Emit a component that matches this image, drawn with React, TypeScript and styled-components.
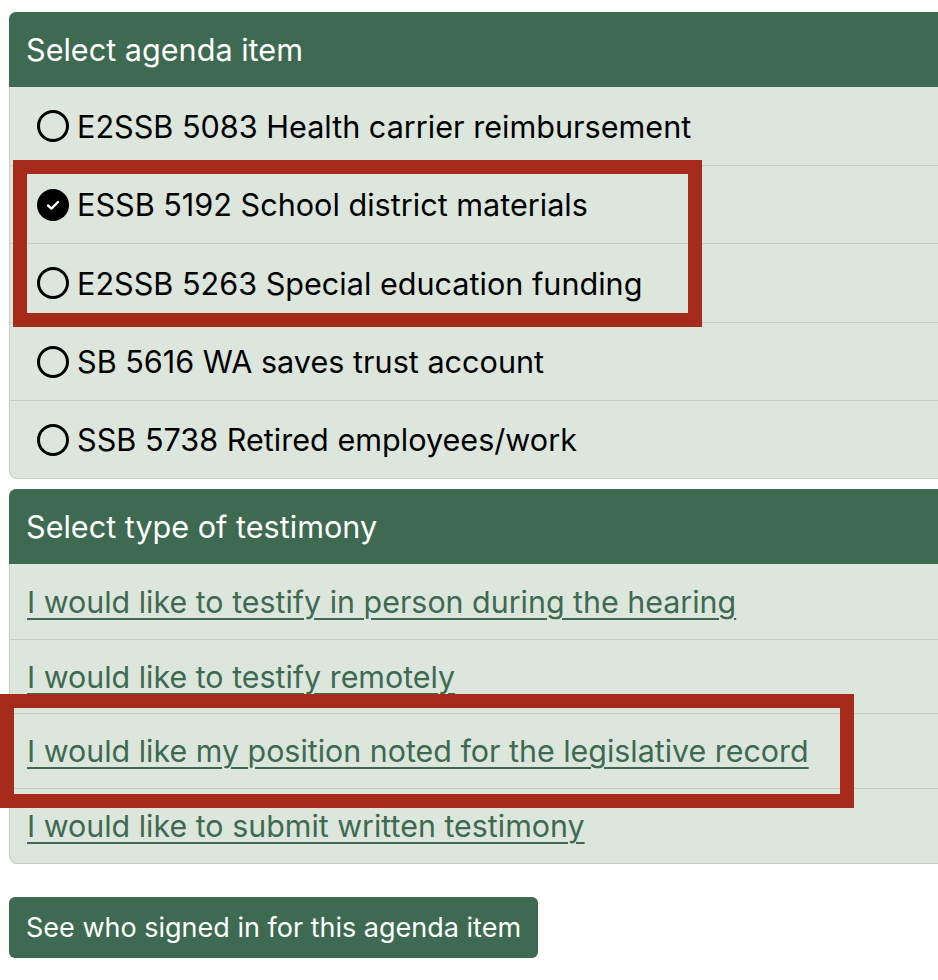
import React from "react";
import styled, { createGlobalStyle } from "styled-components";

const GlobalStyle = createGlobalStyle`
  html, body {
    margin: 0;
    padding: 0;
    background: #ffffff;
    overflow: hidden;
  }
  body {
    font-family: Inter, "Liberation Sans", Arial, sans-serif;
    -webkit-font-smoothing: antialiased;
  }
`;

const GREEN = "#3d6a51";
const BG = "#dde6dd";
const LINE = "#c3cec5";
const RED = "#a62b1b";

const Page = styled.div`
  padding: 12px 0 0 9px;
  display: flex;
  flex-direction: column;
  align-items: stretch;
`;

const Card = styled.section<{ $gap?: number }>`
  background: ${BG};
  border: 1px solid ${LINE};
  border-right: none;
  border-radius: 8px 0 0 8px;
  margin-bottom: ${(p) => p.$gap ?? 0}px;
`;

const CardHeader = styled.div`
  height: 75px;
  background: ${GREEN};
  color: #ffffff;
  font-size: 30.6px;
  display: flex;
  align-items: center;
  padding-left: 17px;
  border-radius: 7px 0 0 0;
  margin: -1px 0 0 -1px;
`;

const Group = styled.div`
  position: relative;
`;

const Row = styled.div<{ $h: number; $first?: boolean }>`
  height: ${(p) => p.$h}px;
  box-sizing: border-box;
  border-top: ${(p) => (p.$first ? "none" : `1px solid ${LINE}`)};
  display: flex;
  align-items: center;
  color: #000000;
`;

const RadioRow = styled(Row)`
  padding-left: 27px;
  gap: 8px;
  font-size: 30.6px;
`;

const LinkRow = styled(Row)`
  padding-left: 17px;
  font-size: 30.4px;
`;

const Link = styled.a`
  color: ${GREEN};
  text-decoration: underline;
  text-decoration-thickness: 2px;
  text-underline-offset: 5px;
  cursor: pointer;
`;

const Highlight = styled.div<{
  $top: number;
  $left: number;
  $w: number;
  $h: number;
}>`
  position: absolute;
  top: ${(p) => p.$top}px;
  left: ${(p) => p.$left}px;
  width: ${(p) => p.$w}px;
  height: ${(p) => p.$h}px;
  box-sizing: border-box;
  border: 14px solid ${RED};
  pointer-events: none;
`;

const Button = styled.button`
  align-self: flex-start;
  margin-top: 33px;
  height: 61px;
  padding: 0 17px;
  background: ${GREEN};
  color: #ffffff;
  border: none;
  border-radius: 6px;
  font-family: inherit;
  font-size: 27px;
  cursor: pointer;
`;

const RadioIcon = ({ checked }: { checked?: boolean }) =>
  checked ? (
    <svg width="32" height="32" viewBox="0 0 32 32">
      <circle cx="16" cy="16" r="16" fill="#000" />
      <path
        d="M11 16.5 L14.4 19.6 L21 13"
        fill="none"
        stroke="#fff"
        strokeWidth="2.4"
        strokeLinecap="round"
        strokeLinejoin="round"
      />
    </svg>
  ) : (
    <svg width="32" height="32" viewBox="0 0 32 32">
      <circle cx="16" cy="16" r="14.5" fill="none" stroke="#000" strokeWidth="3" />
    </svg>
  );

const agenda = [
  { label: "E2SSB 5083 Health carrier reimbursement" },
  { label: "ESSB 5192 School district materials", checked: true },
  { label: "E2SSB 5263 Special education funding" },
  { label: "SB 5616 WA saves trust account" },
  { label: "SSB 5738 Retired employees/work" },
];

const testimony = [
  "I would like to testify in person during the hearing",
  "I would like to testify remotely",
  "I would like my position noted for the legislative record",
  "I would like to submit written testimony",
];

export default function App() {
  const a = agenda;
  return (
    <>
      <GlobalStyle />
      <Page>
        <Card $gap={10}>
          <CardHeader>Select agenda item</CardHeader>
          <RadioRow $h={78} $first>
            <RadioIcon checked={a[0].checked} />
            {a[0].label}
          </RadioRow>
          <Group>
            <Highlight $top={-5} $left={3} $w={689} $h={167} />
            <RadioRow $h={78}>
              <RadioIcon checked={a[1].checked} />
              {a[1].label}
            </RadioRow>
            <RadioRow $h={79}>
              <RadioIcon checked={a[2].checked} />
              {a[2].label}
            </RadioRow>
          </Group>
          <RadioRow $h={78}>
            <RadioIcon checked={a[3].checked} />
            {a[3].label}
          </RadioRow>
          <RadioRow $h={78}>
            <RadioIcon checked={a[4].checked} />
            {a[4].label}
          </RadioRow>
        </Card>
        <Card>
          <CardHeader>Select type of testimony</CardHeader>
          <LinkRow $h={75} $first>
            <Link>{testimony[0]}</Link>
          </LinkRow>
          <LinkRow $h={74}>
            <Link>{testimony[1]}</Link>
          </LinkRow>
          <Group>
            <Highlight $top={-19} $left={-10} $w={854} $h={114} />
            <LinkRow $h={75}>
              <Link>{testimony[2]}</Link>
            </LinkRow>
          </Group>
          <LinkRow $h={75}>
            <Link>{testimony[3]}</Link>
          </LinkRow>
        </Card>
        <Button>See who signed in for this agenda item</Button>
      </Page>
    </>
  );
}
